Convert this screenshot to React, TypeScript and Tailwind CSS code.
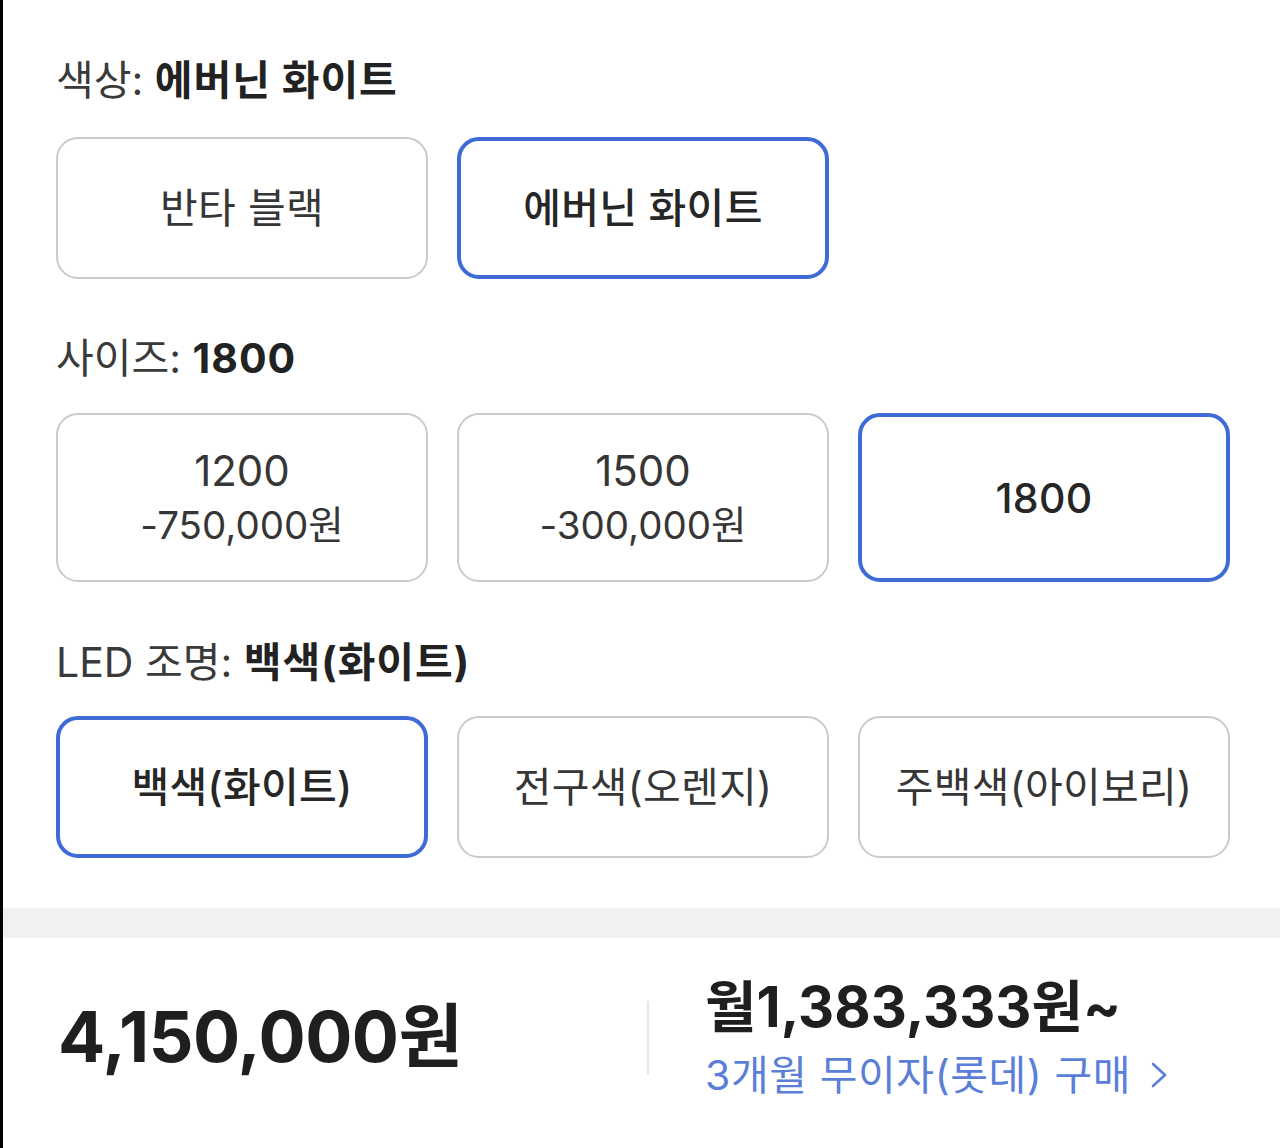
import React from "react";

const font = { fontFamily: '"Inter", "Noto Sans CJK KR", sans-serif' };

type Opt = { label: string; sub?: string; selected?: boolean };

const OptionButton = ({ label, sub, selected }: Opt) => (
  <div
    className={
      selected
        ? "flex flex-col items-center justify-center rounded-[22px] border-[4px] border-[#3f6bd6] bg-white font-medium text-[#262626]"
        : "flex flex-col items-center justify-center rounded-[22px] border-2 border-[#cacaca] bg-white text-[#363636]"
    }
  >
    <div className={sub ? "text-[42px] leading-[54px]" : "text-[41px] leading-[54px] tracking-[0.3px]"}>{label}</div>
    {sub && <div className="text-[38.5px] leading-[54px]">{sub}</div>}
  </div>
);

const Heading = ({ label, value, className }: { label: string; value: string; className: string }) => (
  <div className={"text-[41px] leading-[48px] " + className}>
    <span className="text-[#3a3a3a]">{label} </span>
    <span className="font-bold tracking-[1px] text-[#222222]">{value}</span>
  </div>
);

const App = () => {
  return (
    <div className="min-h-[1148px] w-[1280px] border-l-[3px] border-black bg-white" style={font}>
      <div className="pl-[53px] pr-[50px] pt-[56px]">
        <Heading label="색상:" value="에버닌 화이트" className="" />
        <div className="mt-[33px] grid h-[142px] grid-cols-3 gap-x-[29px]">
          <OptionButton label="반타 블랙" />
          <OptionButton label="에버닌 화이트" selected />
        </div>

        <Heading label="사이즈:" value="1800" className="mt-[55px]" />
        <div className="mt-[31px] grid h-[169px] grid-cols-3 gap-x-[29px]">
          <OptionButton label="1200" sub="-750,000원" />
          <OptionButton label="1500" sub="-300,000원" />
          <OptionButton label="1800" selected />
        </div>

        <Heading label="LED 조명:" value="백색(화이트)" className="mt-[56px]" />
        <div className="mt-[30px] grid h-[142px] grid-cols-3 gap-x-[29px]">
          <OptionButton label="백색(화이트)" selected />
          <OptionButton label="전구색(오렌지)" />
          <OptionButton label="주백색(아이보리)" />
        </div>
      </div>

      <div className="mt-[50px] h-[30px] bg-[#f1f1f4]" />

      <div className="flex h-[210px] items-center pb-[12px] pl-[55px]">
        <div className="w-[589px] text-[70px] font-bold leading-[80px] tracking-[-0.5px] text-[#1f1f1f]">
          4,150,000원
        </div>
        <div className="h-[73px] w-[2px] bg-[#e6e6e6]" />
        <div className="ml-[56px]">
          <div className="text-[56px] font-bold leading-[64px] text-[#1f1f1f]">월1,383,333원~</div>
          <div className="mt-[12px] flex items-center text-[41px] leading-[48px] tracking-[0.6px] text-[#5b7fd8]">
            <span>3개월 무이자(롯데) 구매</span>
            <svg className="ml-[20px]" width="16" height="26" viewBox="0 0 16 26" fill="none">
              <polyline points="2,2 14,13 2,24" stroke="#5b7fd8" strokeWidth="2.6" strokeLinecap="round" strokeLinejoin="round" />
            </svg>
          </div>
        </div>
      </div>
    </div>
  );
};

export default App;
